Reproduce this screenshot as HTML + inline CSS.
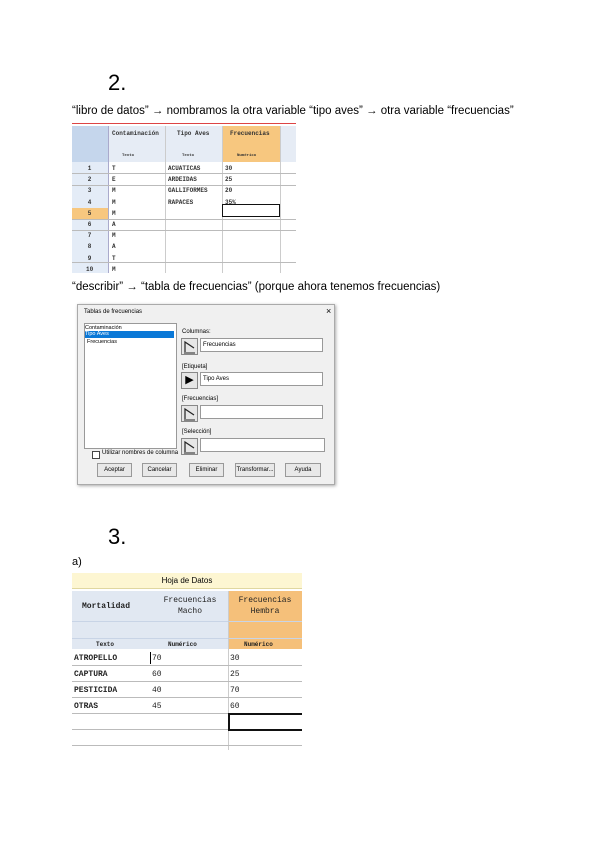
<!DOCTYPE html>
<html><head><style>
body{margin:0;width:600px;height:848px;background:#fff;position:relative;font-family:"Liberation Sans",sans-serif;overflow:hidden}
.a{position:absolute}
.t{font-size:6px;font-family:"Liberation Mono",monospace;font-weight:bold;color:#333;white-space:nowrap}
.m{font-family:"Liberation Mono",monospace;font-weight:bold;white-space:nowrap;color:#222}
.bt{position:absolute;border:1px solid #999;background:#e8e8e8;font-size:6px;text-align:center;line-height:12px;height:12px}
.ic{position:absolute;width:15px;height:15px;border:1px solid #888;background:#e6e6e6}
.in{position:absolute;height:12px;border:1px solid #999;background:#fff;font-size:6px;line-height:12px;padding-left:2px}
</style></head><body>
<div class="a" style="left:108px;top:70px;font-size:22px">2.</div>
<div class="a" style="left:72px;top:105px;font-size:11.5px;white-space:nowrap">“libro de datos” → nombramos la otra variable “tipo aves” → otra variable “frecuencias”</div>

<div class="a" style="left:72px;top:119px;width:224px;height:154px;overflow:hidden;background:#fff">
 <div class="a" style="left:0;top:0;width:224px;height:4px;border-bottom:1px solid #d44"></div>
 <div class="a" style="left:0;top:7px;width:36px;height:36px;background:#c5d6ec"></div>
 <div class="a" style="left:36px;top:7px;width:188px;height:36px;background:#e6ecf5"></div>
 <div class="a" style="left:150px;top:7px;width:58px;height:36px;background:#f7c77f"></div>
 <div class="a" style="left:0;top:43px;width:36px;height:111px;background:#e4ecf7"></div>
 <div class="a" style="left:0;top:89px;width:36px;height:11px;background:#f7c77f"></div>
 <div class="a t" style="left:40px;top:11px">Contaminación</div>
 <div class="a t" style="left:105px;top:11px">Tipo Aves</div>
 <div class="a t" style="left:158px;top:11px">Frecuencias</div>
 <div class="a t" style="left:50px;top:35px;font-size:4px">Texto</div>
 <div class="a t" style="left:110px;top:35px;font-size:4px">Texto</div>
 <div class="a t" style="left:165px;top:35px;font-size:4px">Numérico</div>
 <div class="a" style="left:93px;top:7px;width:1px;height:147px;background:#ccc"></div>
 <div class="a" style="left:150px;top:7px;width:1px;height:147px;background:#ccc"></div>
 <div class="a" style="left:208px;top:7px;width:1px;height:147px;background:#ccc"></div>
 <div class="a" style="left:36px;top:7px;width:1px;height:147px;background:#aac"></div>
 <div class="a" style="left:0;top:54px;width:224px;height:1px;background:#bbb"></div>
 <div class="a" style="left:0;top:66px;width:224px;height:1px;background:#bbb"></div>
 <div class="a" style="left:0;top:100px;width:224px;height:1px;background:#bbb"></div>
 <div class="a" style="left:0;top:111px;width:224px;height:1px;background:#bbb"></div>
 <div class="a" style="left:0;top:143px;width:224px;height:1px;background:#bbb"></div>
 <div class="a" style="left:150px;top:85px;width:56px;height:11px;border:1.5px solid #111"></div>
 <div class="a t" style="left:14px;top:44px;line-height:11.2px;font-size:6px;text-align:center">1<br>2<br>3<br>4<br>5<br>6<br>7<br>8<br>9<br>10</div>
 <div class="a t" style="left:40px;top:44px;line-height:11.2px">T<br>E<br>M<br>M<br>M<br>A<br>M<br>A<br>T<br>M</div>
 <div class="a t" style="left:96px;top:44px;line-height:11.2px">ACUATICAS<br>ARDEIDAS<br>GALLIFORMES<br>RAPACES</div>
 <div class="a t" style="left:153px;top:44px;line-height:11.2px">30<br>25<br>20<br>35%</div>
</div>

<div class="a" style="left:72px;top:281px;font-size:11.5px;white-space:nowrap">“describir” → “tabla de frecuencias” (porque ahora tenemos frecuencias)</div>

<div class="a" style="left:77px;top:304px;width:256px;height:179px;background:#f0f0f0;border:1px solid #aaa;box-shadow:1px 1px 3px #aaa">
 <div class="a" style="left:6px;top:4px;font-size:6px">Tablas de frecuencias</div>
 <div class="a" style="left:248px;top:1px;font-size:9px">×</div>
 <div class="a" style="left:6px;top:18px;width:91px;height:124px;background:#fff;border:1px solid #999"></div>
 <div class="a" style="left:7px;top:20px;font-size:5.5px">Contaminación</div>
 <div class="a" style="left:7px;top:26px;width:89px;height:7px;background:#0a78d7;color:#fff;font-size:5.5px">Tipo Aves</div>
 <div class="a" style="left:9px;top:34px;font-size:5.5px">Frecuencias</div>
 <div class="a" style="left:14px;top:146px;width:6px;height:6px;border:1px solid #444;background:#fff"></div>
 <div class="a" style="left:24px;top:145px;font-size:6px">Utilizar nombres de columna</div>
 <div class="a" style="left:104px;top:24px;font-size:6px">Columnas:</div>
 <div class="ic" style="left:103px;top:33px"><svg width="15" height="15"><path d="M3 13V3L12 9" fill="none" stroke="#222" stroke-width="1.2"/><path d="M2 14H13" stroke="#222"/></svg></div><div class="in" style="left:122px;top:33px;width:119px">Frecuencias</div>
 <div class="a" style="left:104px;top:59px;font-size:6px">[Etiqueta]</div>
 <div class="ic" style="left:103px;top:67px;font-size:11px;line-height:15px;text-align:center">▶</div><div class="in" style="left:122px;top:67px;width:119px">Tipo Aves</div>
 <div class="a" style="left:104px;top:91px;font-size:6px">[Frecuencias]</div>
 <div class="ic" style="left:103px;top:100px"><svg width="15" height="15"><path d="M3 13V3L12 9" fill="none" stroke="#222" stroke-width="1.2"/><path d="M2 14H13" stroke="#222"/></svg></div><div class="in" style="left:122px;top:100px;width:119px"></div>
 <div class="a" style="left:104px;top:124px;font-size:6px">[Selección]</div>
 <div class="ic" style="left:103px;top:133px"><svg width="15" height="15"><path d="M3 13V3L12 9" fill="none" stroke="#222" stroke-width="1.2"/><path d="M2 14H13" stroke="#222"/></svg></div><div class="in" style="left:122px;top:133px;width:121px"></div>
 <div class="bt" style="left:19px;top:158px;width:33px">Aceptar</div>
 <div class="bt" style="left:64px;top:158px;width:33px">Cancelar</div>
 <div class="bt" style="left:111px;top:158px;width:33px">Eliminar</div>
 <div class="bt" style="left:157px;top:158px;width:38px">Transformar...</div>
 <div class="bt" style="left:207px;top:158px;width:34px">Ayuda</div>
</div>

<div class="a" style="left:108px;top:524px;font-size:22px">3.</div>
<div class="a" style="left:72px;top:556px;font-size:11px">a)</div>

<div class="a" style="left:72px;top:573px;width:230px;height:177px;overflow:hidden">
 <div class="a" style="left:0;top:0;width:230px;height:15px;background:#fdf6d2;border-bottom:1px solid #e0d7a0;font-size:8px;text-align:center;line-height:15px">Hoja de Datos</div>
 <div class="a" style="left:0;top:18px;width:156px;height:58px;background:#e1e8f2"></div>
 <div class="a" style="left:156px;top:18px;width:74px;height:58px;background:#f5c07a"></div>
 <div class="a" style="left:0;top:48px;width:230px;height:1px;background:#c8d4e6"></div>
 <div class="a" style="left:0;top:65px;width:230px;height:1px;background:#c8d4e6"></div>
 <div class="a m" style="left:10px;top:29px;font-size:8px">Mortalidad</div>
 <div class="a m" style="left:78px;top:22px;width:80px;text-align:center;font-size:8px;line-height:11px;font-weight:normal">Frecuencias<br>Macho</div>
 <div class="a m" style="left:156px;top:22px;width:74px;text-align:center;font-size:8px;line-height:11px;font-weight:normal">Frecuencias<br>Hembra</div>
 <div class="a m" style="left:24px;top:68px;font-size:6px">Texto</div>
 <div class="a m" style="left:96px;top:68px;font-size:6px">Numérico</div>
 <div class="a m" style="left:172px;top:68px;font-size:6px">Numérico</div>
 <div class="a" style="left:156px;top:18px;width:1px;height:159px;background:#ccc"></div>
 <div class="a" style="left:0;top:92px;width:230px;height:1px;background:#bbb"></div>
 <div class="a" style="left:0;top:108px;width:230px;height:1px;background:#bbb"></div>
 <div class="a" style="left:0;top:124px;width:230px;height:1px;background:#bbb"></div>
 <div class="a" style="left:0;top:140px;width:230px;height:1px;background:#bbb"></div>
 <div class="a" style="left:0;top:156px;width:230px;height:1px;background:#bbb"></div>
 <div class="a" style="left:0;top:172px;width:230px;height:1px;background:#bbb"></div>
 <div class="a" style="left:78px;top:79px;width:1px;height:12px;background:#000"></div>
 <div class="a" style="left:156px;top:140px;width:72px;height:14px;border:2px solid #111"></div>
 <div class="a m" style="left:2px;top:78px;font-size:8px;line-height:16px">ATROPELLO<br>CAPTURA<br>PESTICIDA<br>OTRAS</div>
 <div class="a m" style="left:80px;top:78px;font-size:8px;line-height:16px;font-weight:normal">70<br>60<br>40<br>45</div>
 <div class="a m" style="left:158px;top:78px;font-size:8px;line-height:16px;font-weight:normal">30<br>25<br>70<br>60</div>
</div>
</body></html>
